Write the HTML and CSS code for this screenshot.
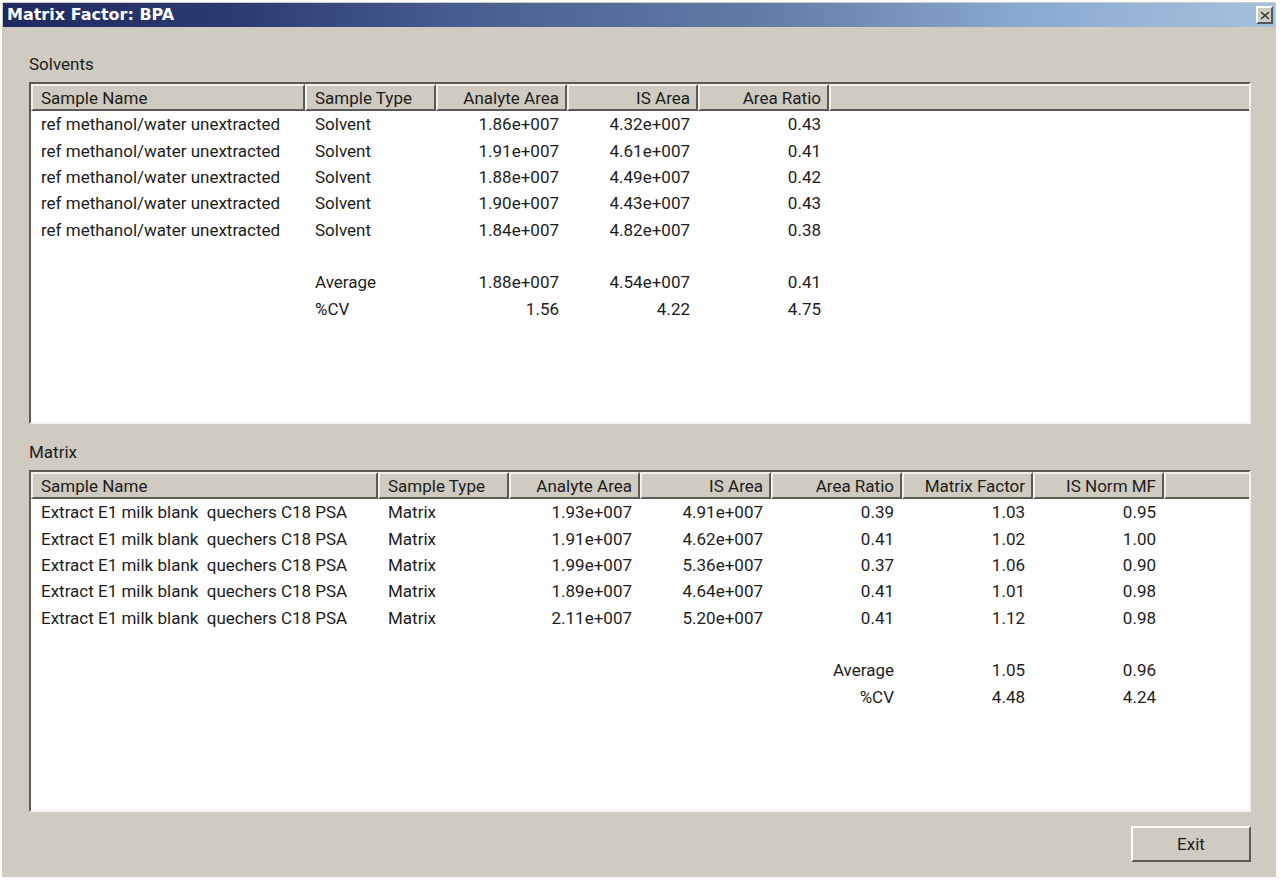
FILE: index.html
```html
<!doctype html>
<html lang="en">
<head>
	<meta charset="utf-8" />
	<title>Matrix Factor: BPA</title>
	<link rel="stylesheet" href="styles.css">
</head>
<body>
	<div class="window">
		<!-- title bar -->
		<div class="title-bar">
			<h1>Matrix Factor: BPA</h1>
			<button type="button" class="close" aria-label="Close">
				<svg width="10" height="9" viewBox="0 0 10 9"><path d="M1 1L9 8M9 1L1 8" /></svg>
			</button>
		</div>
		<div class="content">
			<!-- solvents -->
			<h2 id="solvents">Solvents</h2>
			<div class="list">
				<table aria-labelledby="solvents">
					<colgroup>
						<col class="name"><col class="col"><col class="col"><col class="col"><col class="col"><col>
					</colgroup>
					<thead>
						<tr><th class="text">Sample Name</th><th class="text">Sample Type</th><th>Analyte Area</th><th>IS Area</th><th>Area Ratio</th><th></th></tr>
					</thead>
					<tbody>
						<tr><td class="text">ref methanol/water unextracted</td><td class="text">Solvent</td><td>1.86e+007</td><td>4.32e+007</td><td>0.43</td><td></td></tr>
						<tr><td class="text">ref methanol/water unextracted</td><td class="text">Solvent</td><td>1.91e+007</td><td>4.61e+007</td><td>0.41</td><td></td></tr>
						<tr><td class="text">ref methanol/water unextracted</td><td class="text">Solvent</td><td>1.88e+007</td><td>4.49e+007</td><td>0.42</td><td></td></tr>
						<tr><td class="text">ref methanol/water unextracted</td><td class="text">Solvent</td><td>1.90e+007</td><td>4.43e+007</td><td>0.43</td><td></td></tr>
						<tr><td class="text">ref methanol/water unextracted</td><td class="text">Solvent</td><td>1.84e+007</td><td>4.82e+007</td><td>0.38</td><td></td></tr>
						<tr><td colspan="6"></td></tr>
						<tr><td></td><td class="text">Average</td><td>1.88e+007</td><td>4.54e+007</td><td>0.41</td><td></td></tr>
						<tr><td></td><td class="text">%CV</td><td>1.56</td><td>4.22</td><td>4.75</td><td></td></tr>
					</tbody>
				</table>
			</div>
			<!-- matrix -->
			<h2 id="matrix">Matrix</h2>
			<div class="list">
				<table aria-labelledby="matrix">
					<colgroup>
						<col class="name-wide"><col class="col"><col class="col"><col class="col"><col class="col"><col class="col"><col class="col"><col>
					</colgroup>
					<thead>
						<tr><th class="text">Sample Name</th><th class="text">Sample Type</th><th>Analyte Area</th><th>IS Area</th><th>Area Ratio</th><th>Matrix Factor</th><th>IS Norm MF</th><th></th></tr>
					</thead>
					<tbody>
						<tr><td class="text">Extract E1 milk blank  quechers C18 PSA</td><td class="text">Matrix</td><td>1.93e+007</td><td>4.91e+007</td><td>0.39</td><td>1.03</td><td>0.95</td><td></td></tr>
						<tr><td class="text">Extract E1 milk blank  quechers C18 PSA</td><td class="text">Matrix</td><td>1.91e+007</td><td>4.62e+007</td><td>0.41</td><td>1.02</td><td>1.00</td><td></td></tr>
						<tr><td class="text">Extract E1 milk blank  quechers C18 PSA</td><td class="text">Matrix</td><td>1.99e+007</td><td>5.36e+007</td><td>0.37</td><td>1.06</td><td>0.90</td><td></td></tr>
						<tr><td class="text">Extract E1 milk blank  quechers C18 PSA</td><td class="text">Matrix</td><td>1.89e+007</td><td>4.64e+007</td><td>0.41</td><td>1.01</td><td>0.98</td><td></td></tr>
						<tr><td class="text">Extract E1 milk blank  quechers C18 PSA</td><td class="text">Matrix</td><td>2.11e+007</td><td>5.20e+007</td><td>0.41</td><td>1.12</td><td>0.98</td><td></td></tr>
						<tr><td colspan="8"></td></tr>
						<tr><td></td><td></td><td></td><td></td><td>Average</td><td>1.05</td><td>0.96</td><td></td></tr>
						<tr><td></td><td></td><td></td><td></td><td>%CV</td><td>4.48</td><td>4.24</td><td></td></tr>
					</tbody>
				</table>
			</div>
			<div class="buttons">
				<button type="button" class="exit">Exit</button>
			</div>
		</div>
	</div>
</body>
</html>
```
FILE: styles.css
```css
* {
	box-sizing: border-box;
	margin: 0;
	padding: 0;
}
body {
	height: 100vh;
	padding: 2px 4px 3px 2px;
	background-color: #fff;
	color: #1c1c1c;
	font: 17px/20px Roboto, "Liberation Sans", sans-serif;
}
.window {
	display: flex;
	flex-direction: column;
	min-height: 100%;
	padding: 1px;
	background-color: #d0cbc0;
}
/* title bar */
.title-bar {
	display: flex;
	align-items: center;
	justify-content: space-between;
	height: 24px;
	padding: 0 2px 0 4px;
	background: linear-gradient(to right, #1f2a60, #2b3b72 18%, #475c8e 35%, #627da8 60%, #89a9d0 80%, #a4c2de);
}
.title-bar h1 {
	color: #fff;
	font: bold 16px/24px "DejaVu Sans", sans-serif;
}
.close {
	display: flex;
	align-items: center;
	justify-content: center;
	width: 17px;
	height: 18px;
	border: 2px solid;
	border-color: #fff #4d5860 #4d5860 #fff;
	background-color: #d0cbc0;
}
.close path {
	fill: none;
	stroke: #333;
	stroke-width: 1.5;
}
/* lists */
.content {
	display: flex;
	flex: 1;
	flex-direction: column;
	padding: 23px 24px 14px 26px;
}
.content h2 {
	padding: 4px 0 8px;
	font-size: 17px;
	font-weight: normal;
	line-height: 20px;
}
.list {
	flex: 1 0 0;
	min-height: 270px;
	margin-bottom: 14px;
	border: 2px solid;
	border-color: #5a5a56 #f4f1ec #f4f1ec #5a5a56;
	background-color: #fff;
}
table {
	width: 100%;
	height: 238px;
	border-collapse: separate;
	border-spacing: 0;
	table-layout: fixed;
}
.name {
	width: 274px;
}
.name-wide {
	width: 347px;
}
.col {
	width: 131px;
}
th,
td {
	height: 26px;
	padding: 0 8px 0 10px;
	font-weight: normal;
	text-align: right;
	white-space: pre;
}
th {
	height: 27px;
	padding-right: 6px;
	border: 2px solid;
	border-color: #f4f1ec #5a5a56 #5a5a56 #f4f1ec;
	background-color: #d0cbc0;
}
th.text {
	padding-left: 8px;
}
.text {
	text-align: left;
}
th:last-child {
	border-right: none;
}
/* buttons */
.buttons {
	display: flex;
	justify-content: flex-end;
}
.exit {
	width: 120px;
	height: 36px;
	border: 2px solid;
	border-color: #fff #5a5a56 #5a5a56 #fff;
	background-color: #d0cbc0;
	color: #1c1c1c;
	font: inherit;
}
```
